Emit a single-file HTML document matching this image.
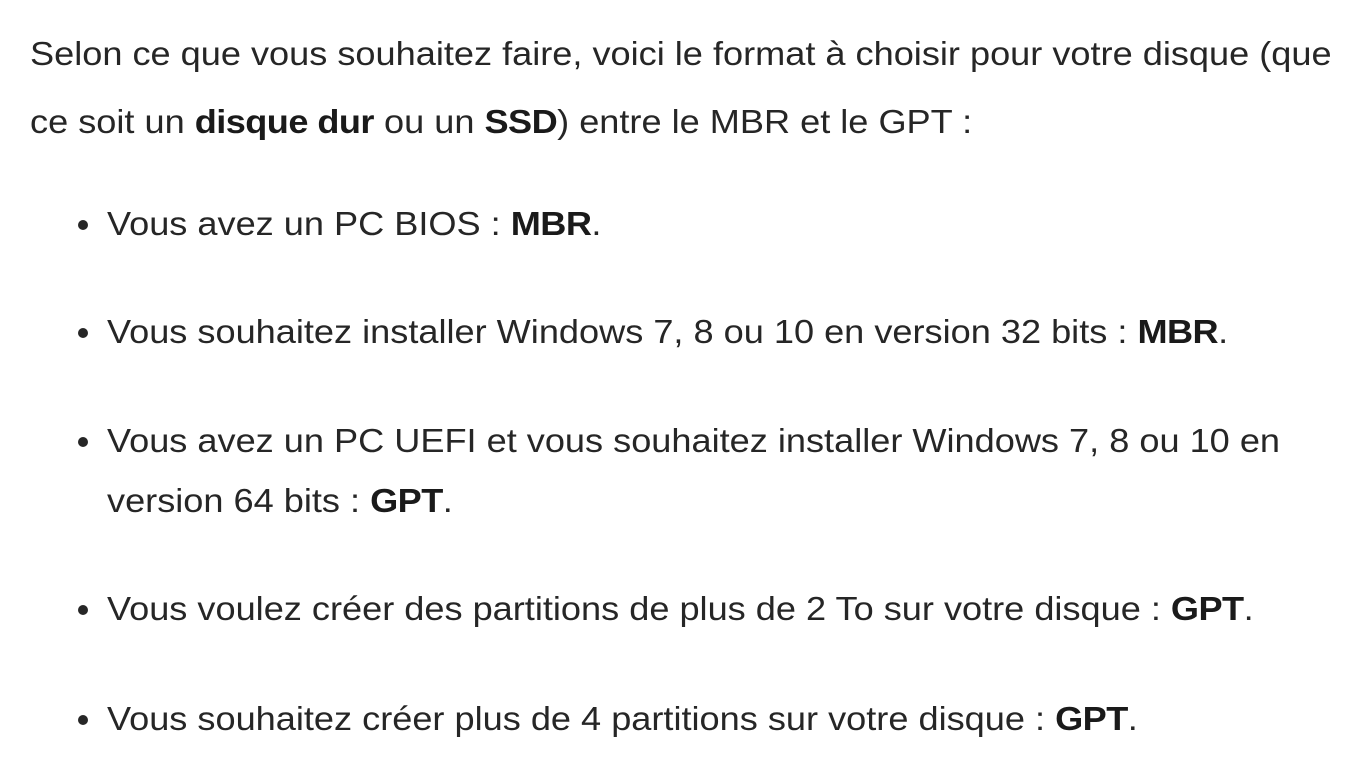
<!DOCTYPE html>
<html><head><meta charset="utf-8"><style>
body{margin:0;width:1372px;height:762px;background:#fff;overflow:hidden;position:relative;font-family:"Liberation Sans",Arial,sans-serif;color:#262626;}
.l{position:absolute;white-space:nowrap;font-size:33px;line-height:40px;transform:scaleX(1.095);transform-origin:0 0;}
b{font-weight:bold;color:#1a1a1a;letter-spacing:-0.5px}
.d{position:absolute;width:10px;height:10px;border-radius:50%;background:#262626;}
</style></head><body>
<div class="l" style="left:30px;top:34px">Selon ce que vous souhaitez faire, voici le format à choisir pour votre disque (que</div>
<div class="l" style="left:30px;top:102px">ce soit un <b>disque dur</b> ou un <b>SSD</b>) entre le MBR et le GPT :</div>
<div class="d" style="left:78px;top:220px"></div>
<div class="l" style="left:107px;top:204px">Vous avez un PC BIOS : <b>MBR</b>.</div>
<div class="d" style="left:78px;top:328px"></div>
<div class="l" style="left:107px;top:312px">Vous souhaitez installer Windows 7, 8 ou 10 en version 32 bits : <b>MBR</b>.</div>
<div class="d" style="left:78px;top:437px"></div>
<div class="l" style="left:107px;top:421px">Vous avez un PC UEFI et vous souhaitez installer Windows 7, 8 ou 10 en</div>
<div class="l" style="left:107px;top:481px">version 64 bits : <b>GPT</b>.</div>
<div class="d" style="left:78px;top:605px"></div>
<div class="l" style="left:107px;top:589px">Vous voulez créer des partitions de plus de 2 To sur votre disque : <b>GPT</b>.</div>
<div class="d" style="left:78px;top:715px"></div>
<div class="l" style="left:107px;top:699px">Vous souhaitez créer plus de 4 partitions sur votre disque : <b>GPT</b>.</div>
</body></html>
